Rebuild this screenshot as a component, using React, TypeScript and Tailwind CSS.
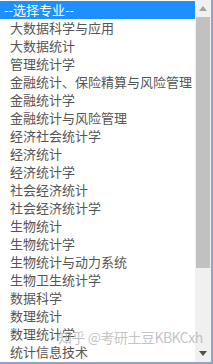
const majors = [
  "大数据科学与应用",
  "大数据统计",
  "管理统计学",
  "金融统计、保险精算与风险管理",
  "金融统计学",
  "金融统计与风险管理",
  "经济社会统计学",
  "经济统计",
  "经济统计学",
  "社会经济统计",
  "社会经济统计学",
  "生物统计",
  "生物统计学",
  "生物统计与动力系统",
  "生物卫生统计学",
  "数据科学",
  "数理统计",
  "数理统计学",
  "统计信息技术",
];

export default function App() {
  return (
    <div
      className="relative w-[213px] h-[364px] overflow-hidden bg-white flex border-r-2 border-b-2 border-[#8ea4c8]"
      style={{ fontFamily: '"Noto Sans CJK SC", "Noto Sans", sans-serif' }}
    >
      {/* option list */}
      <div className="w-[195px] flex flex-col pt-[1px]">
        <div className="h-[18px] bg-[#1e8fff] text-white text-[13px] leading-[18px] pl-[4px] whitespace-nowrap">
          --选择专业--
        </div>
        {majors.map((m) => (
          <div
            key={m}
            className="h-[18px] text-[#555555] text-[13px] leading-[18px] pl-[10px] whitespace-nowrap"
          >
            {m}
          </div>
        ))}
      </div>

      {/* scrollbar */}
      <div className="w-[16px] bg-[#f0f0f0] flex flex-col">
        <div className="h-[17px] flex items-center justify-center">
          <svg width="8" height="5" viewBox="0 0 8 5">
            <path d="M0 5 L4 0 L8 5 Z" fill="#a3a3a3" />
          </svg>
        </div>
        <div className="mx-[1px] h-[251px] bg-[#c1c1c1]" />
        <div className="flex-1" />
        <div className="h-[17px] flex items-center justify-center">
          <svg width="8" height="5" viewBox="0 0 8 5">
            <path d="M0 0 L8 0 L4 5 Z" fill="#505050" />
          </svg>
        </div>
      </div>

      {/* watermark */}
      <div className="absolute left-[58px] top-[327px] text-[14px] leading-[20px] tracking-[-0.5px] text-[#b4b4b4]/80 whitespace-nowrap pointer-events-none">
        知乎 @考研土豆KBKCxh
      </div>
    </div>
  );
}
